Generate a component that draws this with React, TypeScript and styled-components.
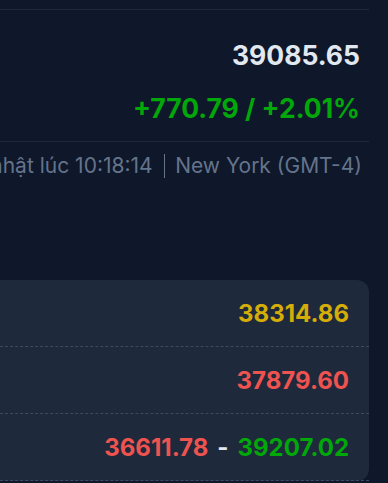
import React from "react";
import styled, { createGlobalStyle } from "styled-components";

const Global = createGlobalStyle`
  html, body { margin: 0; padding: 0; background: #0f172a; }
  body { font-family: Inter, "Noto Sans", sans-serif; overflow: hidden; }
`;

const Page = styled.div`
  width: 369px;
  height: 483px;
  background: #0f172a;
  overflow: visible;
`;

const TopRule = styled.div`
  height: 9px;
  border-bottom: 1px solid #1e293b;
`;

const PriceBlock = styled.div`
  display: flex;
  flex-direction: column;
  align-items: flex-end;
  padding: 28px 9px 0 0;
  height: 132px;
  box-sizing: border-box;
  border-bottom: 1px solid #1e293b;
`;

const BigPrice = styled.div`
  font-size: 26.5px;
  line-height: 34px;
  font-weight: 700;
  color: #e2e8f0;
`;

const Change = styled.div<{ $up: boolean }>`
  margin-top: 21px;
  font-size: 26.5px;
  line-height: 31px;
  font-weight: 700;
  color: ${(p) => (p.$up ? "#00a80a" : "#ef5350")};
`;

const Updated = styled.div`
  display: flex;
  justify-content: flex-end;
  align-items: center;
  padding: 12px 7px 0 0;
  white-space: nowrap;
  font-size: 21px;
  line-height: 24px;
  color: #64748b;
  & > * { flex-shrink: 0; }
`;

const Sep = styled.span`
  display: inline-block;
  width: 1.5px;
  height: 24px;
  background: #64748b;
  margin: 0 10px 0 11px;
`;

const Card = styled.div`
  margin: 102px 0 0 -20px;
  background: #1e293b;
  border-radius: 12px;
`;

const Row = styled.div`
  display: flex;
  justify-content: flex-end;
  align-items: center;
  box-sizing: border-box;
  height: 67px;
  padding-right: 20px;
  border-bottom: 1px dashed #3b4a60;
  font-size: 24px;
  font-weight: 700;
  white-space: nowrap;
`;

const Value = styled.span<{ $tone: "yellow" | "red" | "green" }>`
  color: ${(p) =>
    p.$tone === "yellow" ? "#d4ad08" : p.$tone === "red" ? "#ef5350" : "#00a80a"};
`;

const Dash = styled.span`
  color: #e2e8f0;
  margin: 0 9px;
`;

export default function App() {
  return (
    <>
      <Global />
      <Page>
        <TopRule />
        <PriceBlock>
          <BigPrice>39085.65</BigPrice>
          <Change $up>+770.79 / +2.01%</Change>
        </PriceBlock>
        <Updated>
          <span>Cập nhật lúc 10:18:14</span>
          <Sep />
          <span>New York (GMT-4)</span>
        </Updated>
        <Card>
          <Row>
            <Value $tone="yellow">38314.86</Value>
          </Row>
          <Row>
            <Value $tone="red">37879.60</Value>
          </Row>
          <Row>
            <Value $tone="red">36611.78</Value>
            <Dash>-</Dash>
            <Value $tone="green">39207.02</Value>
          </Row>
        </Card>
      </Page>
    </>
  );
}
